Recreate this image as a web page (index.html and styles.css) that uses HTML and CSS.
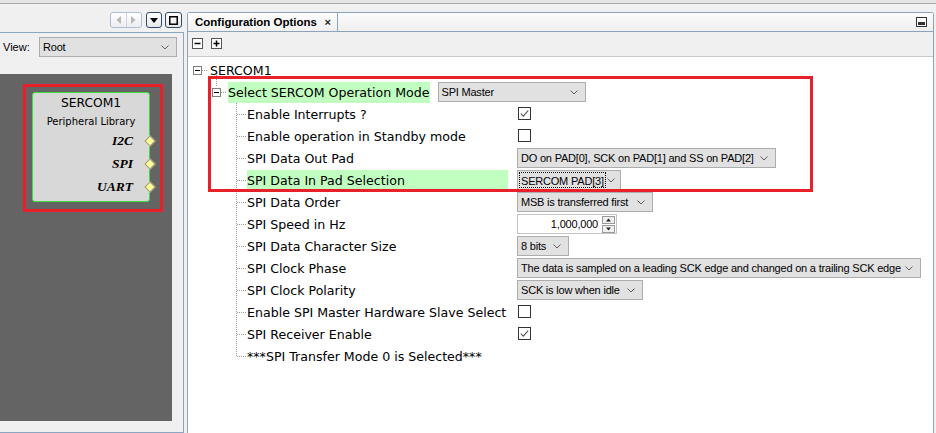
FILE: index.html
```html
<!DOCTYPE html>
<html>
<head>
<meta charset="utf-8">
<title>Configuration Options</title>
<link rel="stylesheet" href="styles.css">
</head>
<body>
<div class="topline"></div>
<div class="main">
  <aside class="left">
    <div class="left-head">
      <div class="navgrp">
        <span class="navhalf"><svg width="5" height="8" viewBox="0 0 5 8"><path d="M5 0 L0.5 4 L5 8Z" fill="#b8b8b8"/></svg></span>
        <span class="navhalf navsep"><svg width="5" height="8" viewBox="0 0 5 8"><path d="M0 0 L4.5 4 L0 8Z" fill="#b8b8b8"/></svg></span>
      </div>
      <span class="hbtn"><svg width="8" height="5" viewBox="0 0 8 5"><path d="M0 0H8L4 5Z" fill="#000"/></svg></span>
      <span class="hbtn hbtn-wide"><svg width="9" height="9" viewBox="0 0 9 9"><rect x="0.75" y="0.75" width="7.5" height="7.5" fill="none" stroke="#000" stroke-width="1.5"/></svg></span>
    </div>
    <div class="left-body">
      <div class="viewrow">
        <span class="viewlbl">View:</span>
        <div class="combo combo-view"><span>Root</span><svg class="chev" width="8" height="5" viewBox="0 0 8 5"><path d="M0.5 0.5 L4 4 L7.5 0.5" fill="none" stroke="#606060"/></svg></div>
      </div>
      <div class="canvas">
        <div class="node">
          <div class="node-title">SERCOM1</div>
          <div class="node-sub">Peripheral Library</div>
          <div class="port"><span>I2C</span><i class="pin"></i></div>
          <div class="port"><span>SPI</span><i class="pin"></i></div>
          <div class="port"><span>UART</span><i class="pin"></i></div>
        </div>
        <div class="redbox redbox-node"></div>
      </div>
    </div>
  </aside>

  <section class="right">
    <div class="tabbar">
      <div class="tab"><span class="tab-title">Configuration Options</span><span class="tab-x">×</span></div>
      <span class="min-icon"><svg width="11" height="10" viewBox="0 0 11 10"><rect x="0.5" y="0.5" width="10" height="9" fill="#fff" stroke="#333"/><rect x="2" y="5" width="7" height="3" fill="#333"/></svg></span>
    </div>
    <div class="toolbar">
      <svg width="11" height="11" viewBox="0 0 11 11"><rect x="0.5" y="0.5" width="10" height="10" fill="#fff" stroke="#555"/><path d="M2.5 5.5h6" stroke="#000" stroke-width="1.5"/></svg>
      <svg width="11" height="11" viewBox="0 0 11 11"><rect x="0.5" y="0.5" width="10" height="10" fill="#fff" stroke="#555"/><path d="M2.5 5.5h6M5.5 2.5v6" stroke="#000" stroke-width="1.5"/></svg>
    </div>
    <div class="content">
      <div class="tree">
        <div class="row r0">
          <svg class="tbox" width="9" height="9" viewBox="0 0 9 9"><rect x="0.5" y="0.5" width="8" height="8" fill="#fff" stroke="#808080"/><path d="M2 4.5h5" stroke="#000"/></svg>
          <span class="conn c6"></span>
          <span class="lbl">SERCOM1</span>
        </div>
        <div class="row r1">
          <svg class="tbox" width="9" height="9" viewBox="0 0 9 9"><rect x="0.5" y="0.5" width="8" height="8" fill="#fff" stroke="#808080"/><path d="M2 4.5h5" stroke="#000"/></svg>
          <span class="conn c6 c6b"></span>
          <span class="lbl hl">Select SERCOM Operation Mode</span>
          <div class="combo c-mode"><span>SPI Master</span><svg class="chev" width="8" height="5" viewBox="0 0 8 5"><path d="M0.5 0.5 L4 4 L7.5 0.5" fill="none" stroke="#606060"/></svg></div>
        </div>

        <div class="row l2">
          <span class="conn"></span><span class="lbl col">Enable Interrupts ?</span>
          <svg class="chk" width="13" height="13" viewBox="0 0 13 13"><rect x="0.5" y="0.5" width="12" height="12" fill="#fff" stroke="#333"/><path d="M2.8 6.6 L5.3 9.1 L10.2 3.6" fill="none" stroke="#555" stroke-width="1.1"/></svg>
        </div>
        <div class="row l2">
          <span class="conn"></span><span class="lbl col">Enable operation in Standby mode</span>
          <svg class="chk" width="13" height="13" viewBox="0 0 13 13"><rect x="0.5" y="0.5" width="12" height="12" fill="#fff" stroke="#333"/></svg>
        </div>
        <div class="row l2">
          <span class="conn"></span><span class="lbl col">SPI Data Out Pad</span>
          <div class="combo c-out"><span>DO on PAD[0], SCK on PAD[1] and SS on PAD[2]</span><svg class="chev" width="8" height="5" viewBox="0 0 8 5"><path d="M0.5 0.5 L4 4 L7.5 0.5" fill="none" stroke="#606060"/></svg></div>
        </div>
        <div class="row l2">
          <span class="conn"></span><span class="lbl col hl">SPI Data In Pad Selection</span>
          <div class="combo c-in"><span class="focus">SERCOM PAD[3]</span><svg class="chev" width="8" height="5" viewBox="0 0 8 5"><path d="M0.5 0.5 L4 4 L7.5 0.5" fill="none" stroke="#606060"/></svg></div>
        </div>
        <div class="row l2">
          <span class="conn"></span><span class="lbl col">SPI Data Order</span>
          <div class="combo c-order"><span>MSB is transferred first</span><svg class="chev" width="8" height="5" viewBox="0 0 8 5"><path d="M0.5 0.5 L4 4 L7.5 0.5" fill="none" stroke="#606060"/></svg></div>
        </div>
        <div class="row l2">
          <span class="conn"></span><span class="lbl col">SPI Speed in Hz</span>
          <div class="spin"><span>1,000,000</span>
            <span class="spinbtns">
              <svg width="13" height="8" viewBox="0 0 13 8"><rect x="0.5" y="0.5" width="12" height="7" fill="#f0f0f0" stroke="#9a9a9a"/><path d="M4 5.5H9L6.5 2.5Z" fill="#222"/></svg>
              <svg width="13" height="8" viewBox="0 0 13 8"><rect x="0.5" y="0.5" width="12" height="7" fill="#f0f0f0" stroke="#9a9a9a"/><path d="M4 2.5H9L6.5 5.5Z" fill="#222"/></svg>
            </span>
          </div>
        </div>
        <div class="row l2">
          <span class="conn"></span><span class="lbl col">SPI Data Character Size</span>
          <div class="combo c-size"><span>8 bits</span><svg class="chev" width="8" height="5" viewBox="0 0 8 5"><path d="M0.5 0.5 L4 4 L7.5 0.5" fill="none" stroke="#606060"/></svg></div>
        </div>
        <div class="row l2">
          <span class="conn"></span><span class="lbl col">SPI Clock Phase</span>
          <div class="combo c-phase"><span>The data is sampled on a leading SCK edge and changed on a trailing SCK edge</span><svg class="chev" width="8" height="5" viewBox="0 0 8 5"><path d="M0.5 0.5 L4 4 L7.5 0.5" fill="none" stroke="#606060"/></svg></div>
        </div>
        <div class="row l2">
          <span class="conn"></span><span class="lbl col">SPI Clock Polarity</span>
          <div class="combo c-pol"><span>SCK is low when idle</span><svg class="chev" width="8" height="5" viewBox="0 0 8 5"><path d="M0.5 0.5 L4 4 L7.5 0.5" fill="none" stroke="#606060"/></svg></div>
        </div>
        <div class="row l2">
          <span class="conn"></span><span class="lbl col">Enable SPI Master Hardware Slave Select</span>
          <svg class="chk" width="13" height="13" viewBox="0 0 13 13"><rect x="0.5" y="0.5" width="12" height="12" fill="#fff" stroke="#333"/></svg>
        </div>
        <div class="row l2">
          <span class="conn"></span><span class="lbl col">SPI Receiver Enable</span>
          <svg class="chk" width="13" height="13" viewBox="0 0 13 13"><rect x="0.5" y="0.5" width="12" height="12" fill="#fff" stroke="#333"/><path d="M2.8 6.6 L5.3 9.1 L10.2 3.6" fill="none" stroke="#555" stroke-width="1.1"/></svg>
        </div>
        <div class="row l2 last">
          <span class="conn"></span><span class="lbl">***SPI Transfer Mode 0 is Selected***</span>
        </div>
      </div>
      <div class="redbox redbox-cfg"></div>
    </div>
  </section>
</div>
</body>
</html>
```

FILE: styles.css
```css
html, body {
  margin: 0;
  padding: 0;
}
body {
  width: 936px;
  height: 433px;
  overflow: hidden;
  background: #f0f0f0;
  font-family: "DejaVu Sans", sans-serif;
  color: #000;
}
.topline {
  height: 3px;
  background: #e4e4e4;
  border-bottom: 1px solid #a8a8a8;
}
.main {
  display: flex;
  height: 429px;
}

/* ---------- left panel ---------- */
.left {
  width: 184px;
  display: flex;
  flex-direction: column;
}
.left-head {
  height: 29px;
  box-sizing: border-box;
  border-bottom: 1px solid #8ca6c2;
  display: flex;
  justify-content: flex-end;
  align-items: flex-start;
  padding: 8px 2px 0 0;
  gap: 3px;
}
.navgrp {
  width: 32px;
  height: 16px;
  box-sizing: border-box;
  border: 1px solid #adc0d6;
  border-radius: 3px;
  display: flex;
  margin-right: 1px;
  background: linear-gradient(#ffffff, #ededed);
}
.navhalf {
  flex: 1;
  display: flex;
  align-items: center;
  justify-content: center;
}
.navsep {
  border-left: 1px solid #c8d4e2;
}
.hbtn {
  width: 16px;
  height: 16px;
  box-sizing: border-box;
  border: 1px solid #2e4a68;
  border-radius: 3px;
  display: flex;
  align-items: center;
  justify-content: center;
  background: linear-gradient(#ffffff, #e8e8e8);
}
.hbtn-wide {
  width: 17px;
}
.left-body {
  flex: 1;
  border-right: 1px solid #8ca6c2;
  border-bottom: 1px solid #8ca6c2;
  display: flex;
  flex-direction: column;
}
.viewrow {
  height: 41px;
  box-sizing: border-box;
  padding: 4px 0 0 3px;
  display: flex;
  align-items: flex-start;
}
.viewlbl {
  width: 36px;
  height: 20px;
  line-height: 20px;
  font-family: "Liberation Sans", Arial, sans-serif;
  font-size: 11px;
}
.combo-view {
  width: 138px;
  font-size: 11px;
}
.canvas {
  position: relative;
  width: 172px;
  height: 347px;
  background: #646464;
}
.node {
  position: absolute;
  left: 32px;
  top: 18px;
  width: 118px;
  height: 110px;
  box-sizing: border-box;
  background: #d8d8d8;
  border: 1px solid #3fdc3f;
  border-radius: 3px;
  padding-top: 2px;
}
.node-title {
  height: 16px;
  line-height: 16px;
  text-align: center;
  font-size: 12.3px;
}
.node-sub {
  margin-top: 4px;
  height: 14px;
  line-height: 14px;
  text-align: center;
  font-size: 10px;
}
.port {
  height: 23px;
  display: flex;
  align-items: center;
  justify-content: flex-end;
}
.port span {
  font-family: "Liberation Serif", "Times New Roman", serif;
  font-weight: bold;
  font-style: italic;
  font-size: 13.5px;
}
.pin {
  width: 8px;
  height: 8px;
  box-sizing: border-box;
  margin-left: 13px;
  margin-right: -5px;
  background: #ffff9e;
  border: 1px solid #9a9a7a;
  transform: rotate(45deg);
}
.redbox {
  position: absolute;
  box-sizing: border-box;
  border: 3px solid #e8202a;
  pointer-events: none;
}
.redbox-node {
  left: 23px;
  top: 10px;
  width: 140px;
  height: 128px;
}

/* ---------- right panel ---------- */
.right {
  margin-left: 3px;
  margin-top: 8px;
  width: 747px;
  box-sizing: border-box;
  border: 1px solid #8ea2b8;
  border-bottom: none;
  border-radius: 3px 3px 0 0;
  display: flex;
  flex-direction: column;
}
.tabbar {
  height: 19px;
  box-sizing: border-box;
  border-bottom: 1px solid #8ea2b8;
  display: flex;
  justify-content: space-between;
  align-items: stretch;
  background: linear-gradient(#fbfbfb, #efefef);
}
.tab {
  width: 150px;
  box-sizing: border-box;
  border-right: 1px solid #8ea2b8;
  display: flex;
  align-items: center;
  padding-left: 7px;
  background: linear-gradient(#fdfdfd, #f1f1f1);
}
.tab-title {
  font-family: "Liberation Sans", Arial, sans-serif;
  font-weight: bold;
  font-size: 11.5px;
}
.tab-x {
  margin-left: auto;
  margin-right: 6px;
  font-family: "Liberation Sans", Arial, sans-serif;
  font-weight: bold;
  font-size: 11px;
  color: #222;
}
.min-icon {
  display: flex;
  align-items: center;
  margin-right: 6px;
}
.toolbar {
  height: 25px;
  box-sizing: border-box;
  border-bottom: 1px solid #c8c8c8;
  display: flex;
  align-items: flex-start;
  gap: 8px;
  padding: 6px 0 0 4px;
}
.content {
  position: relative;
  flex: 1;
  background: #fff;
  padding-top: 2px;
}
.tree {
  font-size: 12.6px;
}
.row {
  height: 22px;
  display: flex;
  align-items: center;
  white-space: nowrap;
  background-repeat: no-repeat;
}
.r0 {
  padding-left: 5px;
  background-image: repeating-linear-gradient(to bottom, #9a9a9a 0 1px, transparent 1px 2px);
  background-position: 28px 16px;
  background-size: 1px 6px;
}
.r1 {
  padding-left: 24px;
  background-image:
    repeating-linear-gradient(to bottom, #9a9a9a 0 1px, transparent 1px 2px),
    repeating-linear-gradient(to bottom, #9a9a9a 0 1px, transparent 1px 2px);
  background-position: 28px 0, 48px 18px;
  background-size: 1px 6px, 1px 4px;
}
.l2 {
  padding-left: 49px;
  background-image: repeating-linear-gradient(to bottom, #9a9a9a 0 1px, transparent 1px 2px);
  background-position: 48px 0;
  background-size: 1px 100%;
}
.l2.last {
  background-size: 1px 11px;
}
.tbox {
  flex: none;
}
.conn {
  flex: none;
  width: 10px;
  height: 1px;
  background: repeating-linear-gradient(to right, #9a9a9a 0 1px, transparent 1px 2px);
}
.c6 {
  width: 6px;
  margin-right: 2px;
}
.c6b {
  margin-right: 1px;
}
.lbl {
  height: 21px;
  line-height: 21px;
}
.col {
  width: 261px;
  margin-right: 9px;
  flex: none;
}
.hl {
  background: #c0ffc0;
}
.r1 .hl {
  margin-right: 8px;
}
.chk {
  margin-left: 1px;
  margin-top: -2px;
}

/* combos */
.combo {
  height: 20px;
  box-sizing: border-box;
  border: 1px solid #adadad;
  background: #e1e1e1;
  display: flex;
  align-items: center;
  justify-content: space-between;
  padding: 0 7px 0 3px;
  font-family: "Liberation Sans", Arial, sans-serif;
  font-size: 11px;
  letter-spacing: -0.2px;
  white-space: nowrap;
  flex: none;
}
.chev {
  flex: none;
}
.c-mode { width: 148px; }
.c-out { width: 259px; }
.c-in { width: 104px; padding-left: 1px; padding-right: 5px; }
.c-order { width: 136px; }
.c-size { width: 52px; }
.c-phase { width: 404px; }
.c-pol { width: 126px; }
.focus {
  height: 16px;
  line-height: 16px;
  box-sizing: border-box;
  border: 1px dotted #000;
  padding: 0 1px;
}
.spin {
  width: 100px;
  height: 20px;
  box-sizing: border-box;
  border: 1px solid #c4c4c4;
  background: #fff;
  display: flex;
  align-items: center;
  justify-content: flex-end;
  padding-right: 1px;
  font-family: "Liberation Sans", Arial, sans-serif;
  font-size: 11px;
  letter-spacing: -0.2px;
  flex: none;
}
.spinbtns {
  display: flex;
  flex-direction: column;
  gap: 1px;
  margin-left: 4px;
}
.spinbtns svg {
  display: block;
}
.redbox-cfg {
  left: 20px;
  top: 19px;
  width: 605px;
  height: 116px;
}
```
